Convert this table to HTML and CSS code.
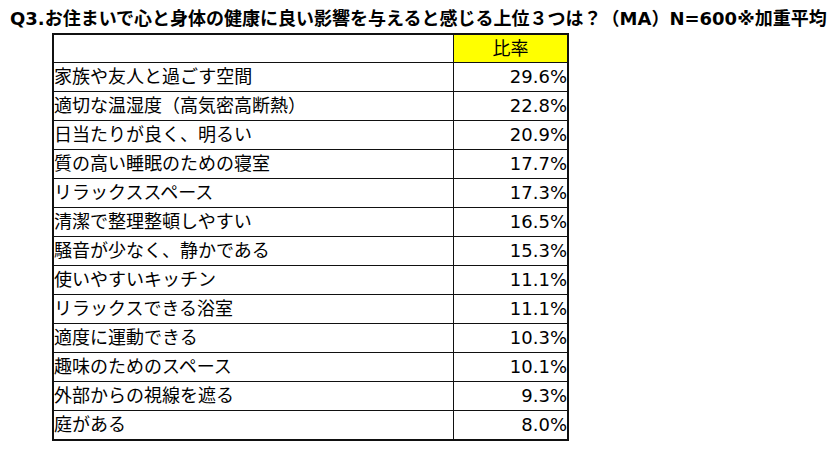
FILE: index.html
```html
<!DOCTYPE html>
<html lang="ja">
<head>
<meta charset="utf-8">
<title>Q3</title>
<link rel="stylesheet" href="styles.css">
</head>
<body>
<h1 class="title">Q3.お住まいで心と身体の健康に良い影響を与えると感じる上位３つは？（MA）N=600※加重平均</h1>
<table class="tbl">
  <thead>
    <tr><th class="blank"></th><th class="head">比率</th></tr>
  </thead>
  <tbody>
    <tr><td class="label">家族や友人と過ごす空間</td><td class="val">29.6%</td></tr>
    <tr><td class="label">適切な温湿度（高気密高断熱）</td><td class="val">22.8%</td></tr>
    <tr><td class="label">日当たりが良く、明るい</td><td class="val">20.9%</td></tr>
    <tr><td class="label">質の高い睡眠のための寝室</td><td class="val">17.7%</td></tr>
    <tr><td class="label">リラックススペース</td><td class="val">17.3%</td></tr>
    <tr><td class="label">清潔で整理整頓しやすい</td><td class="val">16.5%</td></tr>
    <tr><td class="label">騒音が少なく、静かである</td><td class="val">15.3%</td></tr>
    <tr><td class="label">使いやすいキッチン</td><td class="val">11.1%</td></tr>
    <tr><td class="label">リラックスできる浴室</td><td class="val">11.1%</td></tr>
    <tr><td class="label">適度に運動できる</td><td class="val">10.3%</td></tr>
    <tr><td class="label">趣味のためのスペース</td><td class="val">10.1%</td></tr>
    <tr><td class="label">外部からの視線を遮る</td><td class="val">9.3%</td></tr>
    <tr><td class="label">庭がある</td><td class="val">8.0%</td></tr>
  </tbody>
</table>
</body>
</html>
```
FILE: styles.css
```css
html, body {
  margin: 0;
  padding: 0;
  background: #ffffff;
}
body {
  font-family: "DejaVu Sans", "Noto Sans CJK JP", sans-serif;
  color: #000000;
}
.title {
  margin: 0;
  padding: 7px 0 0 10px;
  font-size: 18px;
  line-height: 24px;
  font-weight: bold;
  white-space: nowrap;
  letter-spacing: 0;
}
.tbl {
  margin: 2px 0 0 52px;
  border-collapse: collapse;
  border: 2px solid #111111;
  font-size: 18px;
}
.tbl th, .tbl td {
  border: 1px solid #111111;
  padding: 0;
  height: 28px;
  line-height: 26px;
  font-weight: normal;
  white-space: nowrap;
}
.tbl thead th {
  height: 27px;
}
.blank {
  width: 399px;
  background: #ffffff;
}
.head {
  width: 113px;
  background: #ffff00;
  text-align: center;
}
.label {
  text-align: left;
  padding-left: 2px;
}
.val {
  text-align: right;
  padding-right: 4px;
}
```
